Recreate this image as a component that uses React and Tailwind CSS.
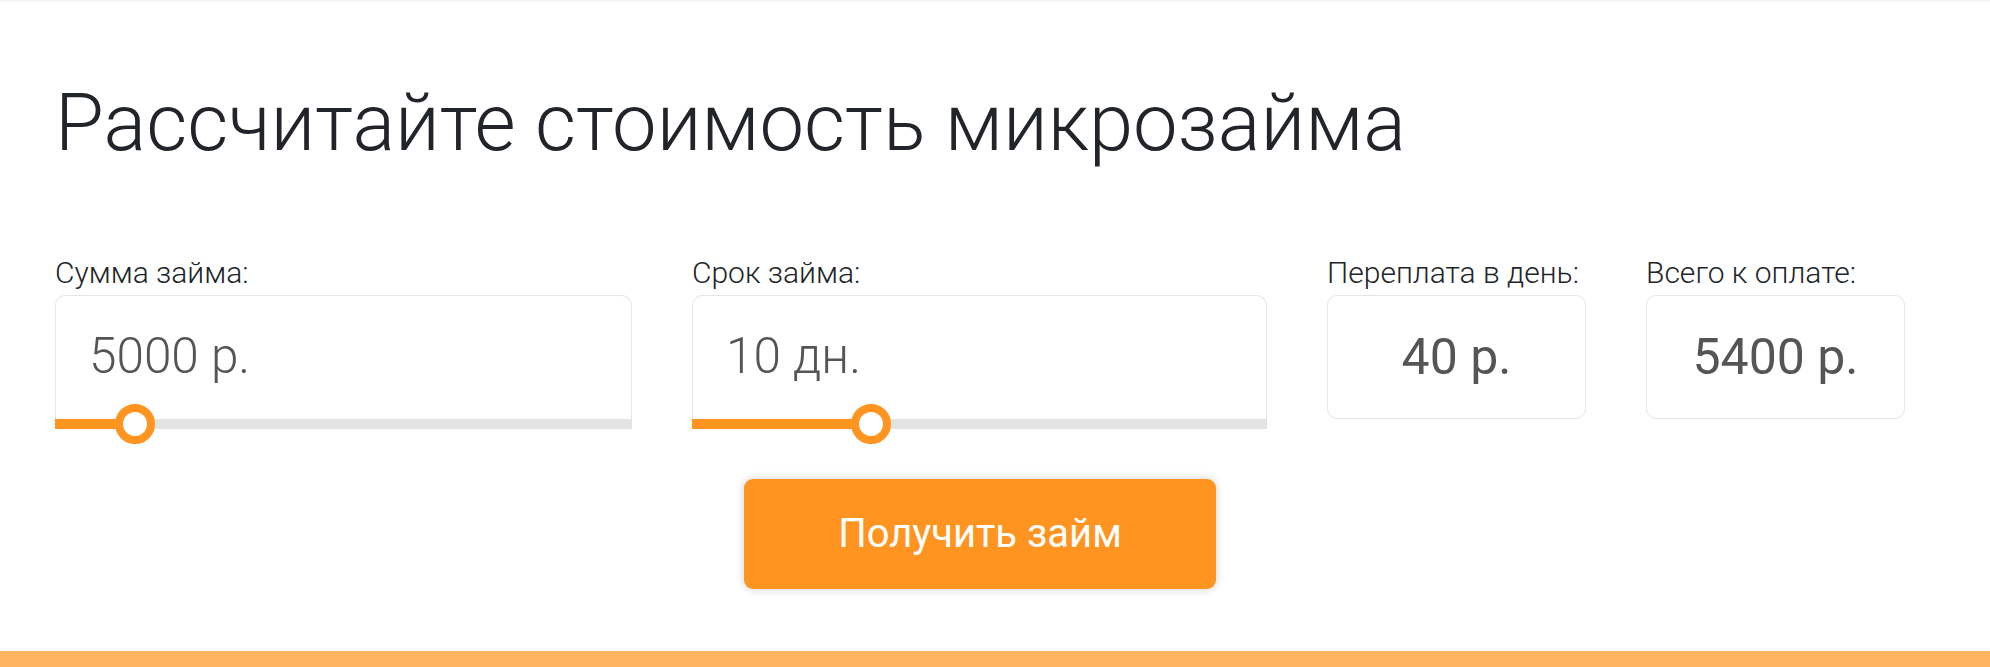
import React from "react";

function SliderField({ label, value, percent, width }) {
  return (
    <div className={"flex flex-col " + width}>
      <div className="text-[30px] font-light leading-none text-[#212529]">{label}</div>
      <div className="mt-[7px] flex flex-col">
        <div className="flex h-[124px] items-center rounded-t-[10px] border border-b-0 border-[#e6e6e6] pl-[33px]">
          <span className="text-[49.5px] font-light leading-none text-[#555]">{value}</span>
        </div>
        <div className="relative h-[10px] bg-[#e3e3e3]">
          <div className="h-full bg-[#ff9520]" style={{ width: percent + "%" }} />
          <div
            className="absolute top-1/2 h-[40px] w-[40px] -translate-x-1/2 -translate-y-1/2 rounded-full border-[8px] border-[#ff9520] bg-white"
            style={{ left: percent + "%" }}
          />
        </div>
      </div>
    </div>
  );
}

function ResultField({ label, value }) {
  return (
    <div className="flex w-[259px] flex-col">
      <div className="whitespace-nowrap text-[30px] font-light leading-none text-[#212529]">{label}</div>
      <div className="mt-[7px] flex h-[124px] items-center justify-center rounded-[10px] border border-[#e6e6e6]">
        <span className="text-[50px] leading-none text-[#555]">{value}</span>
      </div>
    </div>
  );
}

export default function App() {
  return (
    <div className="flex h-[667px] w-full flex-col bg-white font-['Roboto','Noto_Sans',sans-serif]">
      <div className="h-[3px] bg-gradient-to-b from-[#f3f3f3] to-white" />
      <div className="ml-[55px] w-[1850px]">
        <h1 className="pt-[80px] text-[79.5px] font-light leading-none text-[#212529]">
          Рассчитайте стоимость микрозайма
        </h1>
        <div className="mt-[95px] flex gap-[60px]">
          <SliderField label="Сумма займа:" value="5000 р." percent={13.9} width="w-[577px]" />
          <SliderField label="Срок займа:" value="10 дн." percent={31.1} width="w-[575px]" />
          <ResultField label="Переплата в день:" value="40 р." />
          <ResultField label="Всего к оплате:" value="5400 р." />
        </div>
        <div className="mt-[50px] flex justify-center">
          <button
            type="button"
            className="flex h-[110px] w-[472px] items-center justify-center rounded-[9px] bg-[#ff9520] text-[40px] leading-none text-white shadow-[0_0_10px_rgba(0,0,0,0.18)]"
          >
            Получить займ
          </button>
        </div>
      </div>
      <div className="mt-auto h-[16px] bg-[#ffb462]" />
    </div>
  );
}
